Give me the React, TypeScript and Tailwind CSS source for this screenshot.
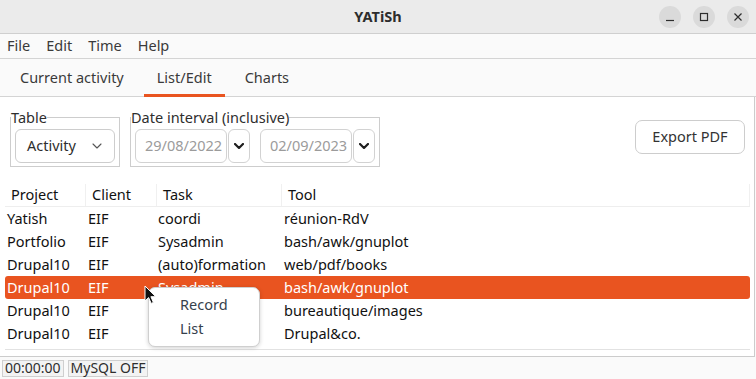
import React from 'react';

const rows = [
  ['Yatish', 'EIF', 'coordi', 'réunion-RdV'],
  ['Portfolio', 'EIF', 'Sysadmin', 'bash/awk/gnuplot'],
  ['Drupal10', 'EIF', '(auto)formation', 'web/pdf/books'],
  ['Drupal10', 'EIF', 'Sysadmin', 'bash/awk/gnuplot'],
  ['Drupal10', 'EIF', 'Bureautique', 'bureautique/images'],
  ['Drupal10', 'EIF', 'Sysadmin', 'Drupal&co.'],
];

const SELECTED = 3;

const Chevron = ({ bold }: { bold?: boolean }) => (
  <svg width="10" height="6" viewBox="0 0 10 6" fill="none">
    <path
      d="M1 1 L5 5 L9 1"
      stroke={bold ? '#1e1e1e' : '#555'}
      strokeWidth={bold ? 2.2 : 1.1}
      strokeLinecap="round"
      strokeLinejoin="round"
    />
  </svg>
);

const TitleButton = ({ children }: { children: React.ReactNode }) => (
  <div className="w-[22px] h-[22px] rounded-full bg-[#dadada] flex items-center justify-center">
    {children}
  </div>
);

const DateEdit = ({ value }: { value: string }) => (
  <div className="flex">
    <div className="w-[92px] h-[34px] border border-[#d2d2d2] rounded-[6px] bg-white flex items-center pl-[9px] overflow-hidden whitespace-nowrap text-[#9b9b9b]">
      {value}
    </div>
    <div className="ml-[1px] w-[22px] h-[34px] border border-[#d2d2d2] rounded-[6px] bg-white flex items-center justify-center">
      <Chevron bold />
    </div>
  </div>
);

export default function App() {
  return (
    <div className="relative w-[756px] h-[379px] overflow-hidden bg-[#fafafa] flex flex-col text-[14.5px] text-[#2e2e2e] font-['Noto_Sans',sans-serif]">
      {/* title bar */}
      <div className="h-[34px] shrink-0 bg-[#ebebeb] border-b border-[#cfcfcf] grid grid-cols-[1fr_auto_1fr] items-center">
        <div />
        <div className="font-bold text-[14.5px] text-[#2d2d2d]">YATiSh</div>
        <div className="flex justify-end gap-[12px] pr-[7px]">
          <TitleButton>
            <svg width="10" height="10" viewBox="0 0 10 10">
              <path d="M1 8.5 H9" stroke="#2d2d2d" strokeWidth="1.2" />
            </svg>
          </TitleButton>
          <TitleButton>
            <svg width="10" height="10" viewBox="0 0 10 10">
              <rect x="1.5" y="1.5" width="7" height="7" fill="none" stroke="#2d2d2d" strokeWidth="1.2" />
            </svg>
          </TitleButton>
          <TitleButton>
            <svg width="10" height="10" viewBox="0 0 10 10">
              <path d="M1.5 1.5 L8.5 8.5 M8.5 1.5 L1.5 8.5" stroke="#2d2d2d" strokeWidth="1.2" />
            </svg>
          </TitleButton>
        </div>
      </div>

      {/* menu bar */}
      <div className="h-[24px] shrink-0 flex items-center pl-[7px] gap-[16px] text-[#3a3a3a]">
        <span>File</span>
        <span>Edit</span>
        <span>Time</span>
        <span>Help</span>
      </div>

      {/* tabs */}
      <div className="h-[39px] shrink-0 border-t border-b border-[#d4d4d4] flex pl-[8px] gap-[8px] text-[#3a3a3a]">
        <div className="px-[12px] flex items-center">Current activity</div>
        <div className="relative px-[13px] flex items-center">
          List/Edit
          <div className="absolute left-0 right-0 bottom-[-1px] h-[3px] bg-[#e95420]" />
        </div>
        <div className="px-[12px] flex items-center">Charts</div>
      </div>

      {/* pane */}
      <div className="h-[260px] shrink-0 w-[755px] bg-white border-r border-b border-[#cccccc] flex flex-col">
        <div className="flex items-start mt-[11px]">
          <fieldset className="ml-[10px] w-[110px] border border-[#cdcdcd] px-[4px] pb-[3px]">
            <legend className="-ml-[4px] text-[14.5px] leading-[18px] text-[#2e2e2e]">Table</legend>
            <div className="mt-[3px] w-[100px] h-[34px] border border-[#cdcdcd] rounded-[6px] bg-white flex items-center pl-[11px] pr-[12px]">
              <span>Activity</span>
              <span className="ml-auto">
                <Chevron />
              </span>
            </div>
          </fieldset>

          <fieldset className="ml-[10px] w-[249px] border border-[#cdcdcd] px-[4px] pb-[3px]">
            <legend className="-ml-[4px] text-[14.5px] leading-[18px] text-[#2e2e2e]">Date interval (inclusive)</legend>
            <div className="mt-[3px] flex gap-[10px]">
              <DateEdit value="29/08/2022" />
              <DateEdit value="02/09/2023" />
            </div>
          </fieldset>

          <button className="ml-auto mr-[9px] mt-[12px] w-[110px] h-[34px] rounded-[7px] border border-[#cdcdcd] bg-white text-[#333]">
            Export PDF
          </button>
        </div>

        {/* table */}
        <div className="mt-[17px] ml-[5px] w-[745px] text-[#111]">
          <div className="h-[23px] flex border-b border-[#eeeeee]">
            <div className="w-[81px] pl-[6px] flex items-center border-r border-[#f0f0f0]">Project</div>
            <div className="w-[71px] pl-[6px] flex items-center border-r border-[#f0f0f0]">Client</div>
            <div className="w-[125px] pl-[6px] flex items-center border-r border-[#f0f0f0]">Task</div>
            <div className="flex-1 pl-[6px] flex items-center border-r border-[#f0f0f0]">Tool</div>
          </div>
          <div className="h-[143px] overflow-hidden border-b border-[#e2e2e2]">
            {rows.map((r, i) => (
              <div
                key={i}
                className={
                  i === SELECTED
                    ? 'h-[23px] flex items-center bg-[#e95420] text-white rounded-[3px]'
                    : 'h-[23px] flex items-center'
                }
              >
                <div className="w-[81px] pl-[2px] whitespace-nowrap">{r[0]}</div>
                <div className="w-[71px] pl-[2px] whitespace-nowrap">{r[1]}</div>
                <div className="w-[125px] pl-[1px] whitespace-nowrap">{r[2]}</div>
                <div className="flex-1 pl-[2px] whitespace-nowrap">{r[3]}</div>
              </div>
            ))}
          </div>
        </div>
      </div>

      {/* status bar */}
      <div className="flex-1 flex items-center gap-[4px] pl-[2px] text-[14px] text-[#2e2e2e]">
        <div className="h-[17px] px-[2px] flex items-center border border-[#cfcfcf] bg-[#f3f3f3] leading-none">00:00:00</div>
        <div className="h-[17px] px-[2px] flex items-center border border-[#cfcfcf] bg-[#f3f3f3] leading-none">MySQL OFF</div>
      </div>

      {/* context menu */}
      <div className="absolute left-[148px] top-[287px] w-[112px] h-[60px] rounded-[7px] border border-[#cfcfcf] bg-white shadow-[0_1px_4px_rgba(0,0,0,0.18)] pt-[5px] text-[#36414c]">
        <div className="h-[24px] flex items-center pl-[31px]">Record</div>
        <div className="h-[24px] flex items-center pl-[31px]">List</div>
      </div>

      {/* mouse pointer */}
      <svg className="absolute left-[144px] top-[285px]" width="13" height="20" viewBox="0 0 13 20">
        <path
          d="M1 1 L1 16 L4.6 12.6 L7.2 18.4 L9.4 17.4 L6.9 11.7 L11.8 11.7 Z"
          fill="#111"
          stroke="#fff"
          strokeWidth="1"
          strokeLinejoin="round"
        />
      </svg>
    </div>
  );
}
